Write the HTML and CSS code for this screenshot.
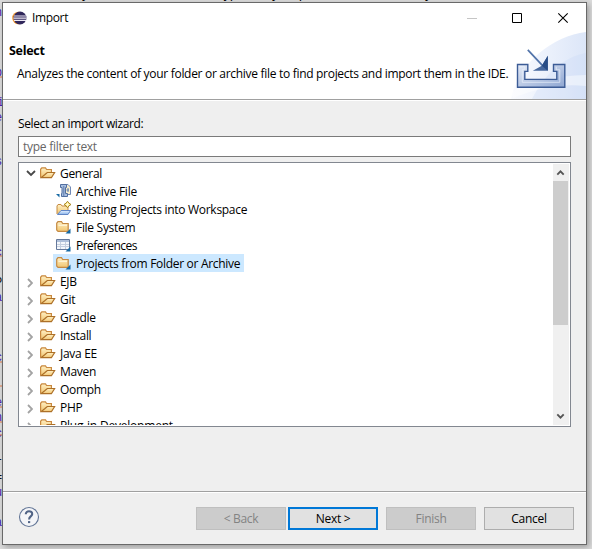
FILE: index.html
```html
<!DOCTYPE html>
<html lang="en">
<head>
<meta charset="utf-8">
<title>Import</title>
<link rel="stylesheet" href="styles.css">
</head>
<body>
<svg class="defs" width="0" height="0">
  <defs>
    <linearGradient id="gold" x1="0" y1="0" x2="0" y2="1"><stop offset="0" stop-color="#fff0c4"/><stop offset="1" stop-color="#f1c672"/></linearGradient>
    <linearGradient id="blue" x1="0" y1="0" x2="0" y2="1"><stop offset="0" stop-color="#e8f2ff"/><stop offset="1" stop-color="#86b2ea"/></linearGradient>
    <symbol id="open" viewBox="0 0 16 16">
      <path d="M.6 12.5V4.3L1.8 2.8H5.5L6.6 4.5H11.4V7" fill="url(#gold)" stroke="#c9893f" stroke-width="1.2"/>
      <path d="M1 12.7 5 9.5 7.3 7.5H14.6L11.4 12.7Z" fill="url(#gold)" stroke="#ad7028" stroke-width="1.2"/>
    </symbol>
    <symbol id="closed" viewBox="0 0 16 16">
      <path d="M.7 11V4.3L2 2.7H5.5L6.7 4.5H12.2V12.3H2Z" fill="url(#gold)" stroke="#c58a43" stroke-width="1.2"/>
      <path d="M2.5 6.3H11" stroke="#fff8df"/>
      <path d="M14.5 9.5V14.5H9.5Z" fill="#176aa5"/>
    </symbol>
    <symbol id="archive" viewBox="0 0 16 16">
      <path d="M5.5 1.5H12L14.5 4V11.5H7" fill="#f7edce" stroke="#7089b8"/>
      <path d="M4.5 1.5H10.5V4.5H9.5V10.5H11.5V13.5H5.5V10.5H6V4.5H4.5Z" fill="#a9bfe1" stroke="#526f9f"/>
      <path d="M7.8 3V13M12 5V9M10.5 7H13" stroke="#627eaa"/>
      <path d="M0 11H3.5V14.5Z" fill="#176aa5"/>
    </symbol>
    <symbol id="project" viewBox="0 0 16 16">
      <path d="M1 13V5L2 3.5H5L6 5H12V9" fill="url(#gold)" stroke="#c58a43"/>
      <path d="M1.5 13.5 5 9.5H14.5L12 13.5Z" fill="url(#blue)" stroke="#6085c5"/>
      <path d="M11.5.3 13 2.3 15 3.5 13 4.8 11.5 6.7 10 4.8 8 3.5 10 2.3Z" fill="#ffe889" stroke="#a88520"/>
      <path d="M11.5 1.7V5.4M9.7 3.5H13.3" stroke="#fffbd1"/>
    </symbol>
    <symbol id="prefs" viewBox="0 0 16 16">
      <path d="M.5 2.5H13.5V12.5H.5Z" fill="#f4f7fb" stroke="#64789b"/>
      <path d="M1 3H13V5H1Z" fill="#aebfd9"/>
      <path d="M1 7.5H13M1 9.5H13M4.5 5V12M9.5 5V12" stroke="#c5cfdf"/>
      <path d="M14.5 9.5V14.5H9.5Z" fill="#176aa5"/>
    </symbol>
    <symbol id="down" viewBox="0 0 10 8"><path d="M1 2 5 6 9 2" fill="none" stroke="#484848" stroke-width="1.8"/></symbol>
    <symbol id="right" viewBox="0 0 6 10"><path d="M1 1 5 5 1 9" fill="none" stroke="#a3a3a3" stroke-width="1.8"/></symbol>
  </defs>
</svg>
<div class="code-top">y</div><div class="code-top code-top2">type</div><div class="code-top code-top3">y</div><div class="code-top code-top4">p</div><div class="code-top code-top5">y</div>
<svg class="code" width="2" height="549">
  <g>
    <text x="-5" y="16">n</text><text x="-5" y="76">b</text><text x="-3" y="106">i</text><text x="-5" y="121">e</text><text x="-5" y="165">s</text><text x="-5" y="256">c</text><text class="ink" x="-5" y="286">P</text><text x="-5" y="301">a</text><text x="-5" y="361">c</text><text x="-5" y="406">e</text><text x="-5" y="421">n</text><text x="-5" y="437">c</text><text class="ink" x="-5" y="466">r</text><text class="ink" x="-5" y="481">=</text><text x="-5" y="496">u</text><text x="-5" y="526">a</text>
  </g>
  <path d="M0 77H2M0 256H2M0 362H2M0 386H2M0 407H2M0 422H2M0 435H2" stroke="#e47b48"/>
</svg>
<main class="window">
  <header class="header">
    <svg class="banner" width="76" height="67" viewBox="0 0 76 67">
      <defs>
        <linearGradient id="glow"><stop stop-color="#fafbff"/><stop offset="1" stop-color="#dce6f8"/></linearGradient>
        <linearGradient id="tray" x1="0" y1="0" x2="1" y2="1"><stop stop-color="#e4eaf6"/><stop offset="1" stop-color="#8ea6d2"/></linearGradient>
      </defs>
      <path d="M1 67C8 31 43 4 76 0V67Z" fill="url(#glow)"/>
      <path d="M22 67C35 41 54 25 76 21V67Z" fill="#c6d7f4" opacity=".3"/>
      <path d="M1 60Q30 44 76 43V54Q40 50 3 66Z" fill="#fff" opacity=".45"/>
      <g transform="translate(.8 .8)">
        <path d="M6.7 31.7H17V38.6H14V46.6H46V38.6H42.7V31.7H54V54.5H6.7Z" fill="url(#tray)" stroke="#3c5c96" stroke-width="1.4"/>
        <path d="M8.5 34H14V36.5H11.5V49.5H49V37H45.5V34" fill="none" stroke="#edf2fc" opacity=".65"/>
        <path d="M17 17 32 33" stroke="#5274aa" stroke-width="1.7"/>
        <path d="M37 23V38H22L31 33Z" fill="#48699f"/>
        <path d="M37 23V38L31 33Z" fill="#294d87"/>
      </g>
    </svg>
    <div class="titlebar">
      <svg class="eclipse" width="16" height="14" viewBox="0 0 16 14">
        <circle cx="6.5" cy="7" r="6.3" fill="#f29a35"/><circle cx="8" cy="7" r="6.5" fill="#30275b"/>
        <path d="M2 5H14M1.5 7.2H14.5M2 9.4H14" stroke="#eeeaf5" stroke-width="1.2"/>
      </svg>
      <span class="wintitle">Import</span>
      <svg class="controls" width="103" height="12" viewBox="0 0 103 12">
        <path d="M0 6.5H10" stroke="#c5c5c5"/><path d="M45.5 1.5H54.5V10.5H45.5Z" fill="none" stroke="#000"/><path d="M91.3 1.3 100.7 10.7M100.7 1.3 91.3 10.7" stroke="#000" stroke-width="1.1"/>
      </svg>
    </div>
    <h1><span>Select</span></h1>
    <p><span class="desc">Analyzes the content of your folder or archive file to find projects and import them in the IDE.</span></p>
  </header>
  <section class="content">
    <label><span class="prompt">Select an import wizard:</span></label>
    <div class="filter"><span>type filter text</span></div>
    <div class="tree">
      <div class="rows">
        <div class="row"><svg class="down"><use href="#down"/></svg><svg class="icon"><use href="#open"/></svg><span>General</span></div>
        <div class="row child"><svg class="icon"><use href="#archive"/></svg><span class="t-archive">Archive File</span></div>
        <div class="row child"><svg class="icon"><use href="#project"/></svg><span>Existing Projects into Workspace</span></div>
        <div class="row child"><svg class="icon"><use href="#closed"/></svg><span>File System</span></div>
        <div class="row child"><svg class="icon"><use href="#prefs"/></svg><span class="t-prefs">Preferences</span></div>
        <div class="row child selected"><svg class="icon"><use href="#closed"/></svg><span>Projects from Folder or Archive</span></div>
        <div class="row"><svg class="right"><use href="#right"/></svg><svg class="icon"><use href="#open"/></svg><span>EJB</span></div>
        <div class="row"><svg class="right"><use href="#right"/></svg><svg class="icon"><use href="#open"/></svg><span>Git</span></div>
        <div class="row"><svg class="right"><use href="#right"/></svg><svg class="icon"><use href="#open"/></svg><span>Gradle</span></div>
        <div class="row"><svg class="right"><use href="#right"/></svg><svg class="icon"><use href="#open"/></svg><span>Install</span></div>
        <div class="row"><svg class="right"><use href="#right"/></svg><svg class="icon"><use href="#open"/></svg><span>Java EE</span></div>
        <div class="row"><svg class="right"><use href="#right"/></svg><svg class="icon"><use href="#open"/></svg><span>Maven</span></div>
        <div class="row"><svg class="right"><use href="#right"/></svg><svg class="icon"><use href="#open"/></svg><span>Oomph</span></div>
        <div class="row"><svg class="right"><use href="#right"/></svg><svg class="icon"><use href="#open"/></svg><span>PHP</span></div>
        <div class="row"><svg class="right"><use href="#right"/></svg><svg class="icon"><use href="#open"/></svg><span class="t-plug">Plug-in Development</span></div>
      </div>
      <div class="scrollbar">
        <svg width="16" height="17" viewBox="0 0 16 17"><path d="M4.3 10.6 7.5 7.4 10.7 10.6" fill="none" stroke="#555" stroke-width="1.9"/></svg>
        <div class="thumb"></div>
        <svg width="16" height="17" viewBox="0 0 16 17"><path d="M4.3 6.4 7.5 9.6 10.7 6.4" fill="none" stroke="#555" stroke-width="1.9"/></svg>
      </div>
    </div>
  </section>
  <footer>
    <svg class="help" width="22" height="22" viewBox="0 0 22 22"><circle cx="11" cy="11" r="9.5" fill="#f4f5f8" stroke="#627596" stroke-width="1.1"/><path d="M7.8 8.3C7.6 4.1 14.4 4.3 14.2 8.1C14 10.6 11.1 10.3 11.1 13.4" fill="none" stroke="#516486" stroke-width="2.1"/><path d="M10 15.1H12.2V17.1H10Z" fill="#516486"/></svg>
    <div class="button disabled">&lt; Back</div>
    <div class="button primary">Next &gt;</div>
    <div class="button disabled finish">Finish</div>
    <div class="button cancel">Cancel</div>
  </footer>
</main>
</body>
</html>
```
FILE: styles.css
```css
* { box-sizing: border-box; }
body { margin: 0; width: 592px; height: 549px; padding: 2px; overflow: hidden; position: relative; background: #dcdcdc; font: 12px/18px "Open Sans", "Noto Sans", sans-serif; color: #000; letter-spacing: -.3px; }
.defs { position: absolute; }
svg { flex: none; display: block; }
span { white-space: nowrap; }
.code { position: absolute; left: 0; top: 0; font: 12px "Liberation Mono", monospace; fill: #4b22b5; letter-spacing: 0; }
.code .ink { fill: #111; }
.code-top { position: absolute; top: -14px; left: 82px; font: 13px/16px "Liberation Sans", sans-serif; letter-spacing: 0; }
.code-top2 { left: 220px; }
.code-top3 { left: 272px; }
.code-top4 { left: 299px; }
.code-top5 { left: 425px; }
.window { position: relative; width: 585px; height: 543px; border: 1px solid #696969; background: #efefef; box-shadow: 2px 2px 6px rgba(0,0,0,.3); display: flex; flex-direction: column; }
.header { position: relative; height: 98px; flex: none; background: #fff; border-bottom: 1px solid #fff; box-shadow: inset 0 -1px #a0a0a0; }
.banner { position: absolute; right: 0; top: 29px; }
.titlebar { height: 30px; display: flex; align-items: center; padding-left: 9px; }
.wintitle { margin-left: 4px; letter-spacing: -.35px; }
.controls { margin-left: auto; margin-right: 16px; }
h1 { margin: 9px 0 0 6px; font-size: 12.5px; line-height: 18px; letter-spacing: -.3px; }
p { position: relative; margin: 5px 0 0 14px; }
.content { padding: 14px 15px 0; flex: 1; }
label { display: block; height: 21px; }
.prompt { letter-spacing: -.38px; }
.filter { height: 21px; border: 1px solid #7a7a7a; background: #fff; padding-left: 4px; line-height: 20px; color: #666; letter-spacing: -.25px; }
.filter span { letter-spacing: -.27px; }
.tree { margin-top: 5px; height: 265px; border: 1px solid #828790; background: #fff; padding: 1px; display: flex; }
.rows { flex: 1; overflow: hidden; }
.row { display: flex; align-items: center; height: 18px; padding-left: 6px; }
.row > span { padding-top: 1px; }
.child { padding-left: 36px; }
.icon { width: 16px; height: 16px; margin-right: 4px; }
.down { width: 10px; height: 8px; margin-right: 4px; }
.right { width: 6px; height: 10px; margin: 4px 7px 0 1px; }
.t-archive { letter-spacing: -.2px; }
.t-prefs { letter-spacing: -.55px; }
.t-plug { letter-spacing: -.2px; }
.selected { width: 191px; margin-left: 33px; padding-left: 3px; background: #cce8ff; }
.scrollbar { width: 16px; background: #f0f0f0; display: flex; flex-direction: column; }
.thumb { width: 15px; height: 144px; margin-bottom: auto; background: #cdcdcd; }
footer { height: 53px; flex: none; border-top: 1px solid #a0a0a0; box-shadow: inset 0 1px #fff; display: flex; padding: 15px 12px 0 15px; }
.help { margin-right: auto; margin-top: -1px; }
.button { width: 90px; height: 23px; border: 1px solid #adadad; background: #e1e1e1; text-align: center; line-height: 22px; margin-left: 2px; }
.disabled { color: #838383; background: #ccc; border-color: #bfbfbf; }
.primary { border: 2px solid #0078d7; line-height: 20px; }
.finish, .cancel { margin-left: 8px; }
```
